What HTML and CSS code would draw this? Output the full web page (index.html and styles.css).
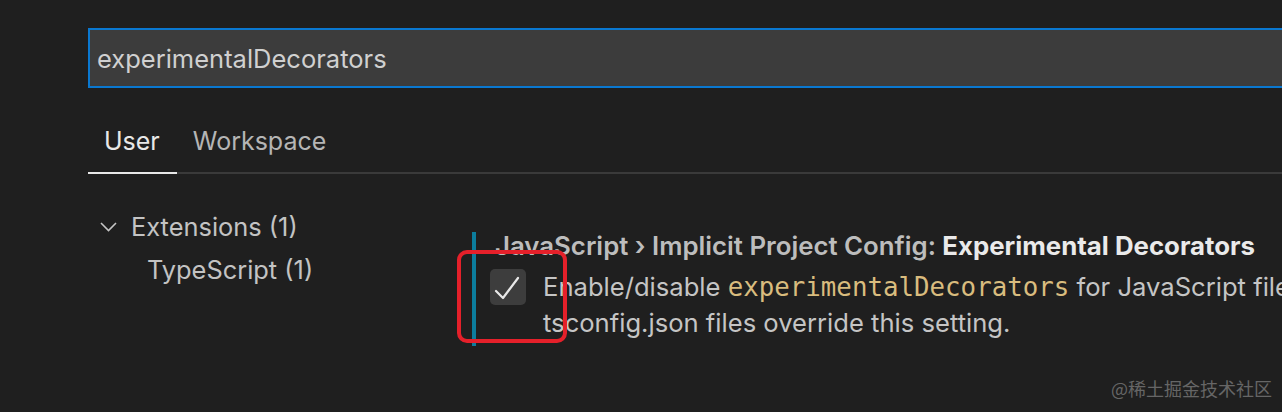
FILE: index.html
```html
<!DOCTYPE html>
<html>
<head>
<meta charset="utf-8">
<link rel="stylesheet" href="styles.css">
</head>
<body>
<div class="page">
  <div class="search">experimentalDecorators</div>
  <div class="tabs">
    <div class="tab active">User</div>
    <div class="tab">Workspace</div>
  </div>
  <div class="content">
    <div class="tree">
      <div class="tree-row">
        <svg class="chev" width="20" height="14" viewBox="0 0 20 14"><polyline points="2,3 9.5,10.5 17,3" fill="none" stroke="#c5c5c5" stroke-width="1.6"/></svg>
        <span>Extensions (1)</span>
      </div>
      <div class="tree-row child"><span>TypeScript (1)</span></div>
    </div>
    <div class="settings">
      <div class="item">
        <div class="title"><span class="cat">JavaScript › Implicit Project Config: </span><span class="name">Experimental Decorators</span></div>
        <div class="row">
          <div class="checkbox">
            <svg width="36" height="36" viewBox="0 0 36 36"><polyline points="6,22 13,29 28,9" fill="none" stroke="#e8e8e8" stroke-width="2.2" stroke-linejoin="round" stroke-linecap="round"/></svg>
          </div>
          <div class="desc">
            <div class="line">Enable/disable <code>experimentalDecorators</code> for JavaScript files that are not part of a project. Existing jsconfig.json or</div>
            <div class="line">tsconfig.json files override this setting.</div>
          </div>
        </div>
        <div class="mark"></div>
      </div>
    </div>
  </div>
  <div class="watermark">@稀土掘金技术社区</div>
</div>
</body>
</html>
```
FILE: styles.css
```css
html, body {
  margin: 0;
  padding: 0;
  background: #1f1f1f;
}
body {
  width: 1282px;
  height: 412px;
  overflow: hidden;
  font-family: Inter, "Noto Sans", "Liberation Sans", sans-serif;
  color: #cccccc;
}
.page {
  position: relative;
  width: 1282px;
  height: 412px;
  overflow: hidden;
}
.search {
  margin: 28px 0 0 88px;
  height: 56px;
  border: 2px solid #0a78d0;
  border-right: none;
  background: #3c3c3c;
  padding-left: 7px;
  font-size: 25.5px;
  line-height: 58px;
  color: #d0d0d0;
  white-space: nowrap;
}
.tabs {
  display: flex;
  margin: 35px 0 0 88px;
  border-bottom: 2px solid #3a3a3a;
}
.tab {
  padding: 0 17px 13px 16px;
  line-height: 36px;
  font-size: 25px;
  color: #b5b5b5;
  border-bottom: 2px solid transparent;
  margin-bottom: -2px;
}
.tab.active {
  color: #e8e8e8;
  border-bottom-color: #e8e8e8;
}
.content {
  display: flex;
}
.tree {
  width: 384px;
  margin-left: 88px;
  padding-top: 31px;
  flex-shrink: 0;
}
.tree-row {
  display: flex;
  align-items: center;
  height: 43px;
  font-size: 25.4px;
  color: #c3c3c3;
  padding-left: 11px;
}
.tree-row .chev {
  margin-right: 12px;
}
.tree-row.child {
  padding-left: 59px;
}
.settings {
  padding-top: 58px;
  flex: 1;
  min-width: 0;
}
.item {
  position: relative;
  border-left: 4px solid #0c7d9d;
  padding: 0 0 5px 14px;
}
.title {
  margin-left: 5px;
  font-size: 25.8px;
  line-height: 28px;
  white-space: nowrap;
  font-weight: 600;
}
.title .cat {
  color: #bdbdbd;
}
.title .name {
  color: #eaeaea;
  font-weight: 700;
}
.row {
  display: flex;
  margin-top: 9px;
}
.checkbox {
  width: 36px;
  height: 36px;
  border-radius: 5px;
  background: #3d3d3d;
  flex-shrink: 0;
}
.checkbox svg {
  display: block;
}
.desc {
  margin-left: 17px;
  font-size: 25.6px;
  line-height: 36px;
  color: #c5c5c5;
  white-space: nowrap;
}
.desc code {
  font-family: "DejaVu Sans Mono", "Liberation Mono", monospace;
  font-size: 25.8px;
  color: #d9bc7e;
}
.mark {
  position: absolute;
  left: -19px;
  top: 18px;
  width: 102px;
  height: 85px;
  border: 4px solid #e5202a;
  border-radius: 10px;
}
.watermark {
  position: absolute;
  right: 10px;
  bottom: 11px;
  font-size: 18px;
  color: #666666;
  font-family: "Noto Sans CJK SC", sans-serif;
}
```
